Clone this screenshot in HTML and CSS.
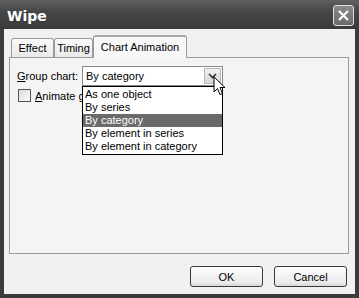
FILE: index.html
```html
<html>
<head>
	<link rel="stylesheet" href="styles.css">
</head>
<body>

<div class="window">
	<div class="titlebar">
		<span class="title">Wipe</span>
		<span class="close">
			<svg width="13" height="13" viewBox="0 0 13 13"><path d="M2 2 L11 11 M11 2 L2 11" stroke="#fff" stroke-width="2.2" fill="none"/></svg>
		</span>
	</div>

	<div class="client">
		<div class="tabs">
			<div class="tab tab-effect">Effect</div>
			<div class="tab tab-timing">Timing</div>
			<div class="tab active">Chart Animation</div>
		</div>

		<div class="panel">
			<div class="row">
				<span class="label"><u>G</u>roup chart:</span>
				<div class="combo">
					<span class="value">By category</span>
					<span class="arrow">
						<svg width="9" height="6" viewBox="0 0 9 6"><path d="M1 1 L4.5 4.5 L8 1" stroke="#333" stroke-width="1.6" fill="none"/></svg>
					</span>
					<ul class="list">
						<li>As one object</li>
						<li>By series</li>
						<li class="selected">By category</li>
						<li>By element in series</li>
						<li>By element in category</li>
					</ul>
					<svg class="cursor" width="14" height="21" viewBox="0 0 14 21"><path d="M1 1 L1 16 L4.5 12.5 L7 18.5 L9.5 17.5 L7 11.5 L12 11.5 Z" fill="#fff" stroke="#000" stroke-width="1"/></svg>
				</div>
			</div>
			<div class="row check-row">
				<span class="checkbox"></span>
				<span class="label check-label"><u>A</u>nimate grid and legend</span>
			</div>
		</div>

		<div class="buttons">
			<div class="button">OK</div>
			<div class="button">Cancel</div>
		</div>
	</div>
</div>

</body>
</html>
```
FILE: styles.css
```css
body {margin: 0px; background: #fff;}

* {box-sizing: border-box;}

.window {
	width: 359px;
	height: 298px;
	background: #3c3c3c;
	display: flex;
	flex-direction: column;
	font-family: "Liberation Sans", Arial, sans-serif;
	font-size: 11px;
	color: #000;
	overflow: hidden;
}

.titlebar {
	height: 29px;
	display: flex;
	align-items: center;
	justify-content: space-between;
	padding: 0 5px 0 7px;
	background: linear-gradient(#606060, #464646 40%, #3a3a3a);
	flex-shrink: 0;
}

.title {
	color: #fff;
	font-weight: bold;
	font-size: 14px;
	font-family: "DejaVu Sans", sans-serif;
	margin-top: 2px;
}

.close {
	width: 21px;
	height: 21px;
	border: 1px solid #e0e0e0;
	border-radius: 3px;
	background: linear-gradient(#8a8a8a, #6a6a6a);
	display: flex;
	align-items: center;
	justify-content: center;
	margin-top: 2px;
}

.client {
	flex: 1;
	margin: 0 4px 4px 4px;
	background: #f1f1f1;
	padding: 6px 6px 0 5px;
	display: flex;
	flex-direction: column;
}

.tabs {
	display: flex;
	align-items: flex-end;
	padding-left: 2px;
	height: 22px;
}

.tab {
	height: 19px;
	line-height: 18px;
	text-align: center;
	border: 1px solid #9a9a9a;
	border-bottom: none;
	border-radius: 3px 3px 0 0;
	background: linear-gradient(#fafafa, #e9e9e9);
	white-space: nowrap;
}

.tab-effect {width: 43px;}
.tab-timing {width: 39px;}

.tab.active {
	width: 94px;
	height: 23px;
	line-height: 20px;
	background: #f7f7f7;
	position: relative;
	top: 1px;
	border-top: 2px solid #a8a8a8;
}

.panel {
	height: 197px;
	border: 1px solid #9a9a9a;
	background: #f4f4f4;
	padding: 8px 7px;
}

.row {
	display: flex;
	align-items: center;
}

.label {
	width: 65px;
	white-space: nowrap;
}

.combo {
	width: 141px;
	height: 20px;
	border: 1px solid #8a8a8a;
	background: #fff;
	position: relative;
	display: flex;
	align-items: center;
}

.value {
	flex: 1;
	padding-left: 3px;
}

.arrow {
	width: 17px;
	height: 16px;
	margin-right: 1px;
	border: 1px solid #b8b8b8;
	background: linear-gradient(#f0f0f0, #d8d8d8);
	display: flex;
	align-items: center;
	justify-content: center;
}

.list {
	position: absolute;
	left: -1px;
	top: 19px;
	width: 141px;
	margin: 0;
	padding: 1px 0;
	list-style: none;
	background: #fff;
	border: 1px solid #000;
	z-index: 2;
}

.list li {
	height: 13px;
	line-height: 13px;
	padding-left: 2px;
	white-space: nowrap;
}

.list li.selected {
	background: #6a6a6a;
	color: #fff;
}

.cursor {
	position: absolute;
	left: 130px;
	top: 9px;
	z-index: 3;
}

.check-row {
	margin-top: 3px;
	margin-left: 1px;
}

.checkbox {
	width: 13px;
	height: 13px;
	border: 1px solid #555;
	background: linear-gradient(135deg, #dcdcdc, #fafafa);
	margin-right: 4px;
}

/* the open list covers the rest of this label */
.check-label {
	width: 47px;
	overflow: hidden;
}

.buttons {
	display: flex;
	justify-content: flex-end;
	gap: 11px;
	padding-top: 12px;
	padding-right: 2px;
}

.button {
	width: 73px;
	height: 21px;
	border: 1px solid #3a3a3a;
	border-radius: 3px;
	background: linear-gradient(#fdfdfd, #ececec 80%, #d8d8d8);
	display: flex;
	align-items: center;
	justify-content: center;
}
```
